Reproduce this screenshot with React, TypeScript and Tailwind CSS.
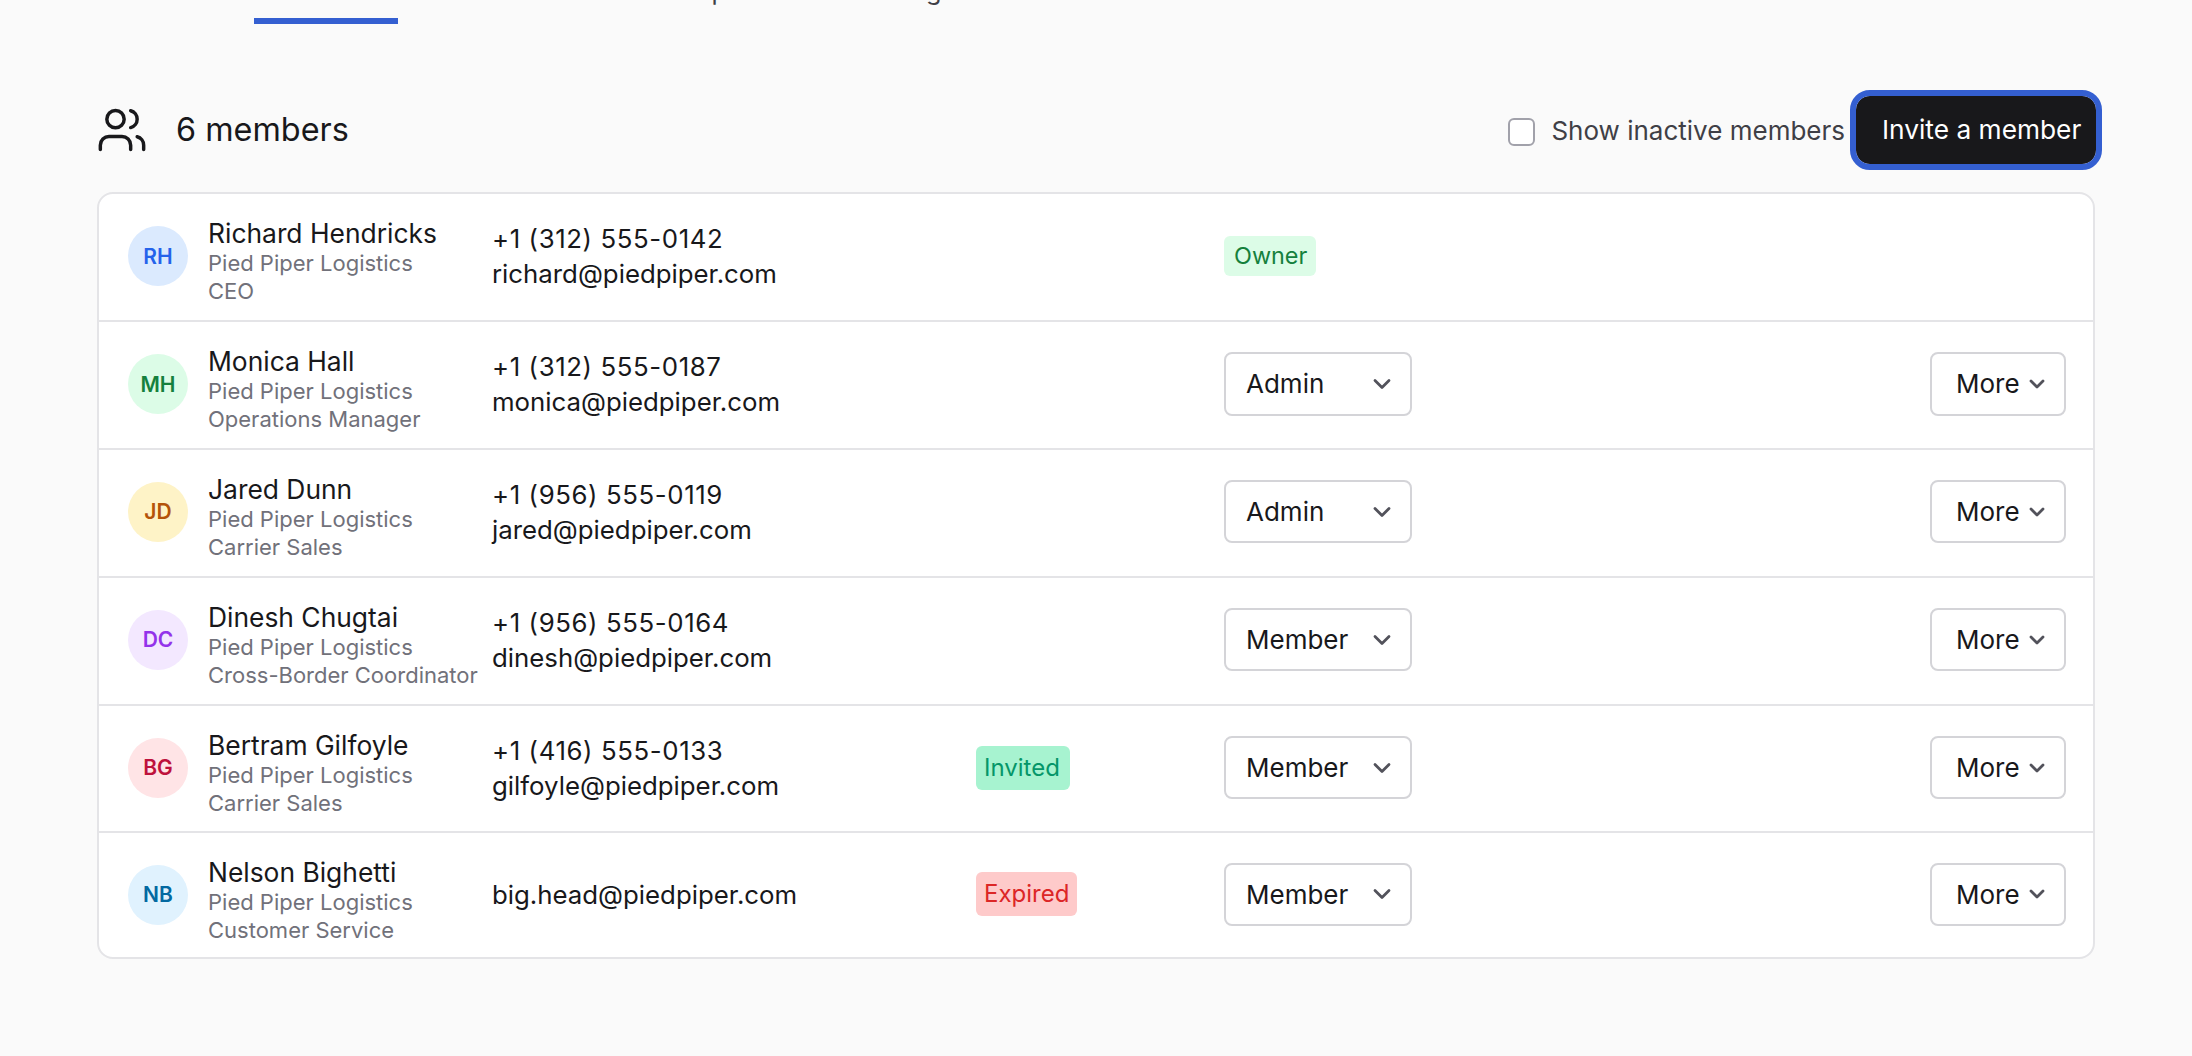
import { ChevronDown, Users } from "lucide-react";

type Member = {
	initials: string;
	avatar: string;
	name: string;
	title: string;
	phone?: string;
	email: string;
	status?: "Invited" | "Expired";
	role: string;
};

const members: Member[] = [
	{ initials: "RH", avatar: "bg-[#dbeafe] text-[#2563eb]", name: "Richard Hendricks", title: "CEO", phone: "+1 (312) 555-0142", email: "richard@piedpiper.com", role: "Owner" },
	{ initials: "MH", avatar: "bg-[#dcfce7] text-[#15803d]", name: "Monica Hall", title: "Operations Manager", phone: "+1 (312) 555-0187", email: "monica@piedpiper.com", role: "Admin" },
	{ initials: "JD", avatar: "bg-[#fef3c7] text-[#b45309]", name: "Jared Dunn", title: "Carrier Sales", phone: "+1 (956) 555-0119", email: "jared@piedpiper.com", role: "Admin" },
	{ initials: "DC", avatar: "bg-[#f3e8ff] text-[#9333ea]", name: "Dinesh Chugtai", title: "Cross-Border Coordinator", phone: "+1 (956) 555-0164", email: "dinesh@piedpiper.com", role: "Member" },
	{ initials: "BG", avatar: "bg-[#ffe4e6] text-[#be123c]", name: "Bertram Gilfoyle", title: "Carrier Sales", phone: "+1 (416) 555-0133", email: "gilfoyle@piedpiper.com", status: "Invited", role: "Member" },
	{ initials: "NB", avatar: "bg-[#e0f2fe] text-[#0369a1]", name: "Nelson Bighetti", title: "Customer Service", email: "big.head@piedpiper.com", status: "Expired", role: "Member" },
];

function Row({ member }: { member: Member }) {
	return (
		<div className="flex h-[127.9px] items-center border-b-2 border-[#e4e4e7] pl-[29px] pr-[27px] last:h-[124px] last:border-b-0">
			<div className={`mb-px flex h-[60px] w-[60px] shrink-0 items-center justify-center rounded-full text-[21px] font-semibold ${member.avatar}`}>
				{member.initials}
			</div>
			<div className="ml-[20px] w-[284px] shrink-0 whitespace-nowrap pt-[10px]">
				<div className="text-[26.4px] leading-[31px] text-[#18181b]">{member.name}</div>
				<div className="text-[22px] leading-[28px] text-[#71717a]">Pied Piper Logistics</div>
				<div className="text-[22px] leading-[28px] text-[#71717a]">{member.title}</div>
			</div>
			<div className="mb-[2px] w-[484px] shrink-0 whitespace-nowrap text-[25.8px] leading-[35px] text-[#18181b]">
				{member.phone && <div className="tracking-[0.6px]">{member.phone}</div>}
				<div>{member.email}</div>
			</div>
			<div className="mb-[2px] w-[248px] shrink-0">
				{member.status === "Invited" && (
					<span className="block h-[44px] w-[94px] rounded-[6px] bg-[#a7f3d0] pl-[8px] text-[24px] leading-[44px] text-[#059669]">Invited</span>
				)}
				{member.status === "Expired" && (
					<span className="block h-[44px] w-[101px] rounded-[6px] bg-[#fecaca] pl-[8px] text-[24px] leading-[44px] text-[#dc2626]">Expired</span>
				)}
			</div>
			{member.role === "Owner" ? (
				<span className="mb-px h-[40px] w-[92px] rounded-[6px] bg-[#dcfce7] pl-[10px] text-[23.4px] leading-[40px] text-[#15803d]">Owner</span>
			) : (
				<>
					<div className="mb-[2px] flex h-[63.5px] w-[188px] items-center justify-between rounded-[8px] border-2 border-[#d4d4d8] bg-white pl-[20px] pr-[14px] text-[26px] text-[#18181b]">
						{member.role}
						<ChevronDown size={28} strokeWidth={2.4} className="text-[#52525b]" />
					</div>
					<div className="mb-[2px] ml-auto flex h-[63.5px] w-[136px] items-center gap-[5px] rounded-[8px] border-2 border-[#d4d4d8] bg-white pl-[24px] text-[26px] text-[#18181b]">
						More
						<ChevronDown size={24} strokeWidth={2.8} className="text-[#52525b]" />
					</div>
				</>
			)}
		</div>
	);
}

export default function App() {
	return (
		<div className="h-[1056px] overflow-hidden bg-[#fafafa] px-[97px] font-['Inter',sans-serif]">
			<nav className="-ml-[97px] flex h-[24px] pl-[254px] text-[25.2px] text-[#3f3f46]">
				<div className="h-[24px] w-[144px] border-b-[6px] border-[#345fd1]">
					<div className="-mt-[24px] text-center leading-[30px]">Members</div>
				</div>
				<div className="-mt-[24px] ml-[258px] leading-[30px]">Companies</div>
				<div className="-mt-[24px] ml-[68px] leading-[30px]">Settings</div>
			</nav>
			<div className="mt-[72px] flex h-[68px] items-center">
				<Users size={52} strokeWidth={1.6} className="-ml-px text-[#18181b]" />
				<h2 className="ml-[28px] text-[32.4px] text-[#18181b]">6 members</h2>
				<label className="ml-auto flex items-center text-[26px] text-[#3f3f46]">
					<span className="mt-[4px] h-[28px] w-[27px] rounded-[6px] border-2 border-[#a1a1aa] bg-white" />
					<span className="ml-[16px]">Show inactive members</span>
				</label>
				<button className="ml-[11px] -mr-px h-[68px] w-[240px] rounded-[14px] bg-[#18181b] pl-[26px] text-left text-[26.3px] text-white outline-[6px] outline-[#345fd1]">
					Invite a member
				</button>
			</div>
			<div className="mt-[28px] overflow-hidden rounded-[16px] border-2 border-[#e4e4e7] bg-white">
				{members.map((m) => (
					<Row key={m.initials} member={m} />
				))}
			</div>
		</div>
	);
}
